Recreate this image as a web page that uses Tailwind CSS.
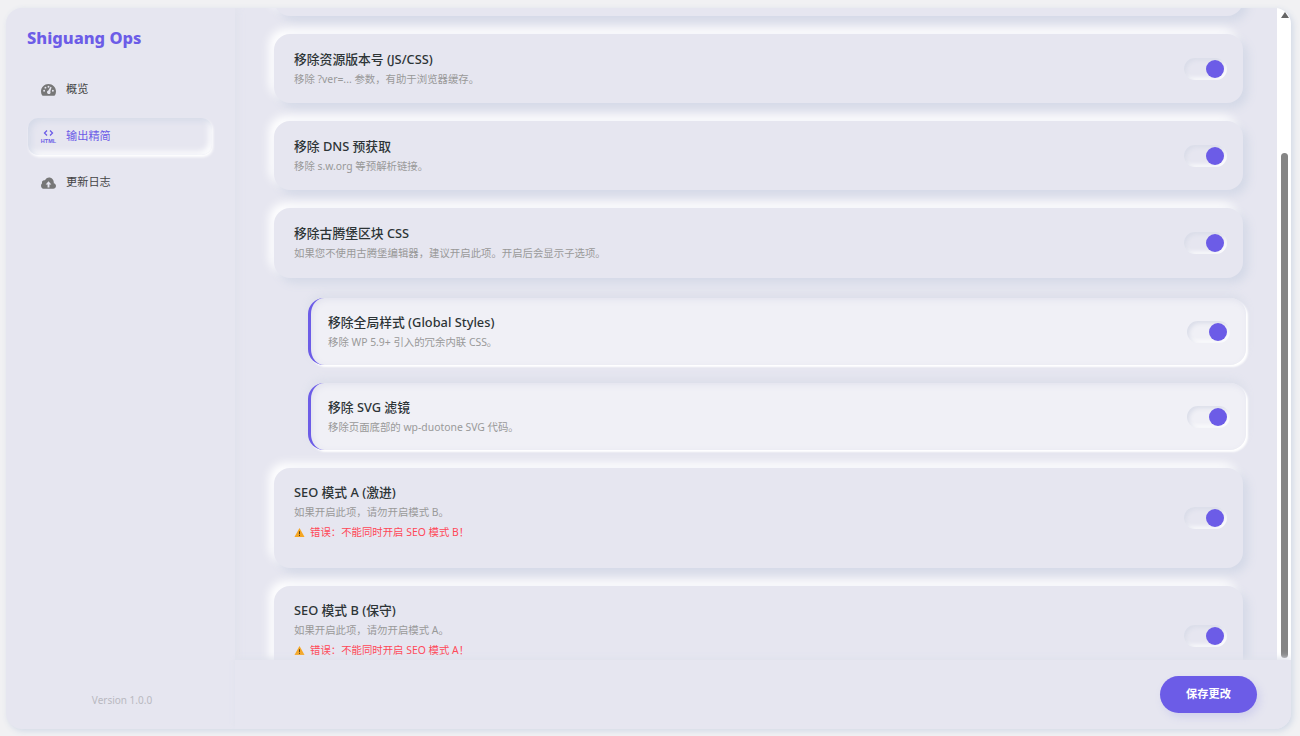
<!DOCTYPE html>
<html lang="zh">
<head>
    <meta charset="UTF-8">
    <title>Shiguang Ops</title>
    <script src="https://cdn.jsdelivr.net/npm/@tailwindcss/browser@4"></script>
</head>
<body class="h-screen overflow-hidden bg-[#f1f1f3] pt-2 pl-1.5 pr-[9px] pb-[7px] font-['Noto_Sans','Noto_Sans_CJK_SC',sans-serif]">
    <div class="flex h-full overflow-hidden rounded-2xl bg-[#e6e6f0] shadow-[2px_2px_6px_#d1d9e6]">

        <!-- sidebar -->
        <aside class="flex w-[229px] shrink-0 flex-col pt-[18px] pb-[21px] shadow-[3px_0_8px_#e0e2ec]">
            <div class="pl-[21px] text-[16.5px] leading-6 font-extrabold text-[#6c5ce7]">Shiguang Ops</div>
            <nav class="mt-[21px] flex flex-col gap-[9.5px] pl-[22px] pr-[23px] text-[11.2px] text-[#444]">
                <a class="flex h-[37px] items-center gap-[10px] pl-[13px]">
                    <svg class="h-[15px] w-[15px] text-[#777]" viewBox="0 0 24 24" fill="currentColor"><path fill-rule="evenodd" d="M12 3C5.4 3 0 8.3 0 15c0 2.200.6 4.200 1.600 6 .3.500.8.800 1.400.800h18c.6 0 1.100-.3 1.400-.8 1-1.800 1.600-3.800 1.600-6 0-6.700-5.400-12-12-12zm0 3a1.500 1.500 0 110 3 1.500 1.500 0 010-3zM5 15.500a1.500 1.500 0 110-3 1.500 1.500 0 010 3zm2.100-5a1.500 1.500 0 110-3 1.500 1.500 0 010 3zm7.900 7.300a3 3 0 01-5.500-1.700c.1-1.300 1-2.300 2.200-2.700l3.300-5.300a1 1 0 011.700 1l-1.800 5.500c.5 1 .6 2.100.100 3.200zM19 15.500a1.500 1.500 0 110-3 1.500 1.500 0 010 3z"/></svg>
                    <span>概览</span>
                </a>
                <a class="flex h-[37px] items-center gap-[9px] rounded-[10px] pl-[12px] text-[#6c5ce7] shadow-[inset_3px_3px_6px_#d5dae8,inset_-3px_-3px_6px_#ffffff,1px_2px_3px_#ffffff]">
                    <svg class="h-[15px] w-[17px]" viewBox="0 0 34 30" fill="none" stroke="#6c5ce7" stroke-width="2.600"><path d="M14 3l-5 5 5 5M20 3l5 5-5 5"/><text x="17" y="28" text-anchor="middle" font-size="11" font-weight="700" fill="#6c5ce7" stroke="none" font-family="Liberation Sans">HTML</text></svg>
                    <span>输出精简</span>
                </a>
                <a class="flex h-[37px] items-center gap-[10px] pl-[13px]">
                    <svg class="h-[15px] w-[15px] text-[#777]" viewBox="0 0 24 24" fill="currentColor"><path fill-rule="evenodd" d="M13 4c-3 0-5.500 1.800-6.600 4.500C6 8.400 5.500 8.300 5 8.300c-2 0-3.500 1.600-3.500 3.500 0 .5.100.9.300 1.300C.7 14 0 15.400 0 17c0 2.800 2.200 5 5 5h14.500c2.500 0 4.500-2 4.500-4.500 0-2.200-1.500-4-3.600-4.400.1-.4.100-.7.100-1.100C20.500 7.400 17.100 4 13 4zm-1 6l4.500 5H13.500v5h-3v-5H7.500z"/></svg>
                    <span>更新日志</span>
                </a>
            </nav>
            <div class="mt-auto pl-[3px] text-center text-[10px] leading-4 text-[#b9b9c0]">Version 1.0.0</div>
        </aside>

        <!-- main column -->
        <main class="flex min-w-0 flex-1 flex-col">
            <div class="flex min-h-0 flex-1">
                <div class="min-w-0 flex-1 overflow-hidden pl-[39px] pr-[34px]">
                    <div class="-mt-[61px] flex flex-col gap-[18px]">

                        <section class="flex h-[69px] items-center justify-between rounded-2xl px-5 pr-4 shadow-[5px_5px_10px_#d4d9e7,-5px_-5px_10px_#ffffff]"></section>

                        <section class="flex h-[69px] items-center justify-between rounded-2xl pl-5 pr-4 shadow-[5px_5px_10px_#d4d9e7,-5px_-5px_10px_#ffffff]">
                            <div>
                                <h3 class="text-[12.8px] leading-5 font-medium text-[#2d3436]">移除资源版本号 (JS/CSS)</h3>
                                <p class="text-[10.4px] leading-5 text-[#999]">移除 ?ver=... 参数，有助于浏览器缓存。</p>
                            </div>
                            <div class="flex h-[22px] w-[43px] items-center justify-end rounded-full pr-[3px] shadow-[inset_2px_2px_4px_#d9dce8,inset_-2px_-2px_4px_#ffffff]"><span class="h-[18px] w-[18px] rounded-full bg-[#6c5ce7]"></span></div>
                        </section>

                        <section class="flex h-[69px] items-center justify-between rounded-2xl pl-5 pr-4 shadow-[5px_5px_10px_#d4d9e7,-5px_-5px_10px_#ffffff]">
                            <div>
                                <h3 class="text-[12.8px] leading-5 font-medium text-[#2d3436]">移除 DNS 预获取</h3>
                                <p class="text-[10.4px] leading-5 text-[#999]">移除 s.w.org 等预解析链接。</p>
                            </div>
                            <div class="flex h-[22px] w-[43px] items-center justify-end rounded-full pr-[3px] shadow-[inset_2px_2px_4px_#d9dce8,inset_-2px_-2px_4px_#ffffff]"><span class="h-[18px] w-[18px] rounded-full bg-[#6c5ce7]"></span></div>
                        </section>

                        <section class="flex h-[70px] items-center justify-between rounded-2xl pl-5 pr-4 shadow-[5px_5px_10px_#d4d9e7,-5px_-5px_10px_#ffffff]">
                            <div>
                                <h3 class="text-[12.8px] leading-5 font-medium text-[#2d3436]">移除古腾堡区块 CSS</h3>
                                <p class="text-[10.4px] leading-5 text-[#999]">如果您不使用古腾堡编辑器，建议开启此项。开启后会显示子选项。</p>
                            </div>
                            <div class="flex h-[22px] w-[43px] items-center justify-end rounded-full pr-[3px] shadow-[inset_2px_2px_4px_#d9dce8,inset_-2px_-2px_4px_#ffffff]"><span class="h-[18px] w-[18px] rounded-full bg-[#6c5ce7]"></span></div>
                        </section>

                        <section class="-mr-[3px] ml-[34px] mt-[2px] flex h-[67px] items-center justify-between rounded-2xl border-l-[3px] border-[#6c5ce7] bg-[#f0f0f6] pl-[17px] pr-4 shadow-[inset_2px_2px_6px_#e2e3ee,2px_2px_2px_#ffffff,0_-4px_8px_#dcdfea]">
                            <div>
                                <h3 class="text-[12.8px] leading-5 font-medium text-[#2d3436]">移除全局样式 (Global Styles)</h3>
                                <p class="text-[10.4px] leading-5 text-[#999]">移除 WP 5.9+ 引入的冗余内联 CSS。</p>
                            </div>
                            <div class="flex h-[22px] w-[43px] items-center justify-end rounded-full pr-[3px] shadow-[inset_2px_2px_4px_#d9dce8,inset_-2px_-2px_4px_#ffffff]"><span class="h-[18px] w-[18px] rounded-full bg-[#6c5ce7]"></span></div>
                        </section>

                        <section class="-mr-[3px] ml-[34px] flex h-[67px] items-center justify-between rounded-2xl border-l-[3px] border-[#6c5ce7] bg-[#f0f0f6] pl-[17px] pr-4 shadow-[inset_2px_2px_6px_#e2e3ee,2px_2px_2px_#ffffff,0_-4px_8px_#dcdfea]">
                            <div>
                                <h3 class="text-[12.8px] leading-5 font-medium text-[#2d3436]">移除 SVG 滤镜</h3>
                                <p class="text-[10.4px] leading-5 text-[#999]">移除页面底部的 wp-duotone SVG 代码。</p>
                            </div>
                            <div class="flex h-[22px] w-[43px] items-center justify-end rounded-full pr-[3px] shadow-[inset_2px_2px_4px_#d9dce8,inset_-2px_-2px_4px_#ffffff]"><span class="h-[18px] w-[18px] rounded-full bg-[#6c5ce7]"></span></div>
                        </section>

                        <section class="flex h-[100px] items-center justify-between rounded-2xl pl-5 pr-4 shadow-[5px_5px_10px_#d4d9e7,-5px_-5px_10px_#ffffff]">
                            <div class="pb-[12px]">
                                <h3 class="text-[12.8px] leading-5 font-medium text-[#2d3436]">SEO 模式 A (激进)</h3>
                                <p class="text-[10.4px] leading-5 text-[#999]">如果开启此项，请勿开启模式 B。</p>
                                <p class="flex items-center gap-[5px] text-[10.4px] leading-5 text-[#ff4757]">
                                    <svg class="h-[11px] w-[11px]" viewBox="0 0 24 24"><path fill="#f5a623" d="M12 2L1 22h22z"/><path fill="#4a3a1a" d="M11 9h2v7h-2zM11 17.500h2v2h-2z"/></svg>
                                    <span>错误：不能同时开启 SEO 模式 B！</span>
                                </p>
                            </div>
                            <div class="flex h-[22px] w-[43px] items-center justify-end rounded-full pr-[3px] shadow-[inset_2px_2px_4px_#d9dce8,inset_-2px_-2px_4px_#ffffff]"><span class="h-[18px] w-[18px] rounded-full bg-[#6c5ce7]"></span></div>
                        </section>

                        <section class="flex h-[100px] items-center justify-between rounded-2xl pl-5 pr-4 shadow-[5px_5px_10px_#d4d9e7,-5px_-5px_10px_#ffffff]">
                            <div class="pb-[12px]">
                                <h3 class="text-[12.8px] leading-5 font-medium text-[#2d3436]">SEO 模式 B (保守)</h3>
                                <p class="text-[10.4px] leading-5 text-[#999]">如果开启此项，请勿开启模式 A。</p>
                                <p class="flex items-center gap-[5px] text-[10.4px] leading-5 text-[#ff4757]">
                                    <svg class="h-[11px] w-[11px]" viewBox="0 0 24 24"><path fill="#f5a623" d="M12 2L1 22h22z"/><path fill="#4a3a1a" d="M11 9h2v7h-2zM11 17.500h2v2h-2z"/></svg>
                                    <span>错误：不能同时开启 SEO 模式 A！</span>
                                </p>
                            </div>
                            <div class="flex h-[22px] w-[43px] items-center justify-end rounded-full pr-[3px] shadow-[inset_2px_2px_4px_#d9dce8,inset_-2px_-2px_4px_#ffffff]"><span class="h-[18px] w-[18px] rounded-full bg-[#6c5ce7]"></span></div>
                        </section>
                    </div>
                </div>

                <!-- scrollbar -->
                <div class="flex w-[14px] shrink-0 flex-col items-center bg-white pl-[1px]">
                    <svg class="mt-[4px] h-[6px] w-[8px]" viewBox="0 0 8 6"><path fill="#666" d="M4 0l4 6H0z"/></svg>
                    <div class="mt-[135px] mb-[2px] w-[7px] flex-1 rounded-full bg-[#858585]"></div>
                </div>
            </div>

            <footer class="relative flex h-[69px] shrink-0 items-center justify-end bg-[#e6e6f0] pr-[34px] shadow-[0_-2px_6px_#e0e2ec]">
                <button class="h-[37px] w-[97px] rounded-full bg-[#6c5ce7] text-[11.2px] font-bold text-white shadow-[3px_4px_9px_#d0d0ec]">保存更改</button>
            </footer>
        </main>
    </div>
</body>
</html>
